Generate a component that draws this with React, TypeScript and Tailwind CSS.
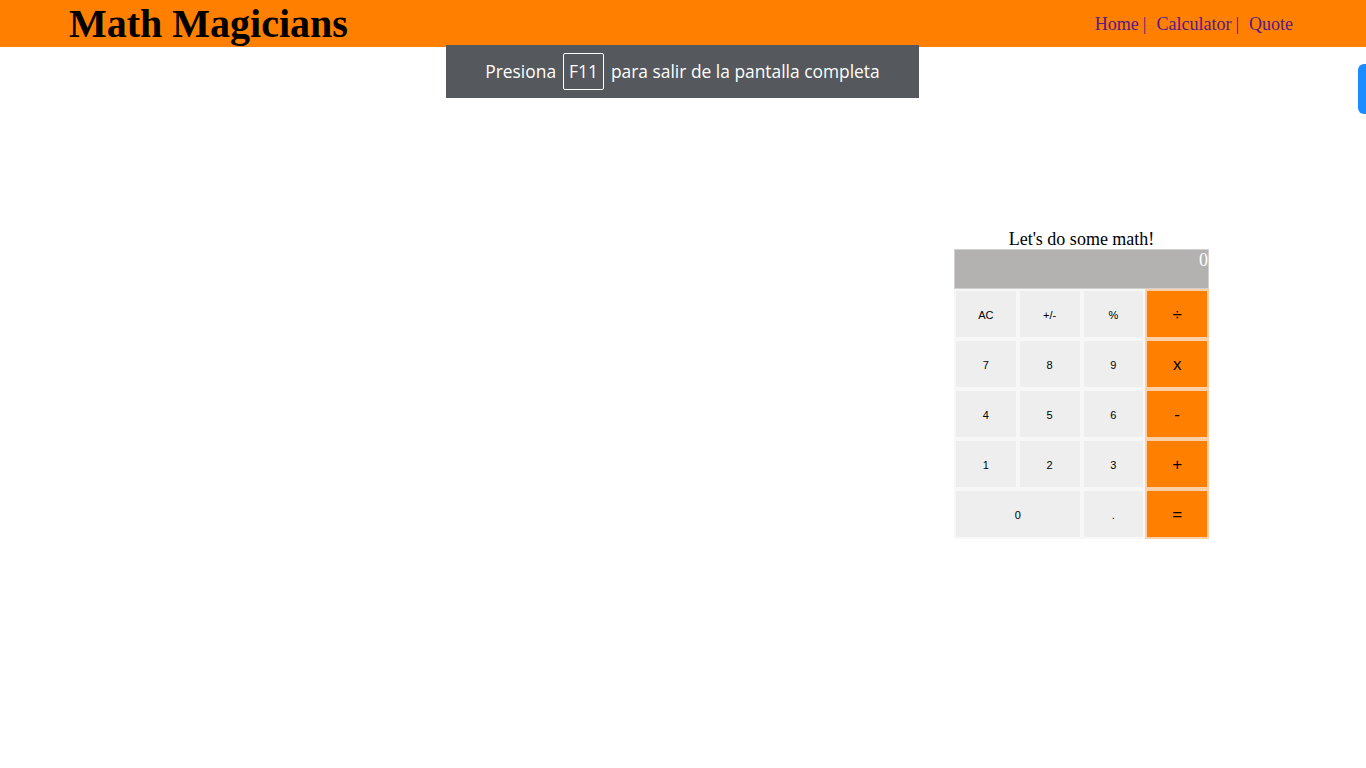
import React from "react"

const keys = [
  { label: "AC", op: false },
  { label: "+/-", op: false },
  { label: "%", op: false },
  { label: "÷", op: true },
  { label: "7", op: false },
  { label: "8", op: false },
  { label: "9", op: false },
  { label: "x", op: true },
  { label: "4", op: false },
  { label: "5", op: false },
  { label: "6", op: false },
  { label: "-", op: true },
  { label: "1", op: false },
  { label: "2", op: false },
  { label: "3", op: false },
  { label: "+", op: true },
  { label: "0", op: false, wide: true },
  { label: ".", op: false },
  { label: "=", op: true },
]

export default function App() {
  return (
    <div className="relative min-h-screen bg-white font-['Liberation_Serif',serif]">
      {/* Header */}
      <header className="h-[47px] bg-[#ff7f00] flex items-center justify-between pl-[69px] pr-[73px]">
        <h1 className="text-[40px] font-bold text-black leading-none">Math Magicians</h1>
        <nav className="text-[18px] text-[#551a8b] flex items-center pt-[2px]">
          <a href="#">Home</a>
          <span className="ml-[4px]">|</span>
          <a href="#" className="ml-[10px]">Calculator</a>
          <span className="ml-[4px]">|</span>
          <a href="#" className="ml-[10px]">Quote</a>
        </nav>
      </header>

      {/* Calculator */}
      <main className="flex justify-end pr-[157px] pt-[182px]">
        <div className="w-[255px] flex flex-col">
          <p className="text-center text-[18px] text-black leading-[20px]">Let's do some math!</p>
          <div className="h-[40px] bg-[#b3b2b0] border border-[#d0d0d0] text-white text-[18px] text-right leading-[20px]">0</div>
          <div className="grid grid-cols-4 font-['Liberation_Sans',sans-serif]">
            {keys.map((k) => (
              <button
                key={k.label}
                className={
                  k.op
                    ? "h-[50px] pt-[2px] bg-[#ff7f00] border-2 border-[#ffcfa6] text-[17px] text-black"
                    : k.wide
                    ? "col-span-2 h-[50px] pt-[2px] bg-[#eeeeee] border-2 border-[#f7f7f7] text-[11px] text-black"
                    : "h-[50px] pt-[2px] bg-[#eeeeee] border-2 border-[#f7f7f7] text-[11px] text-black"
                }
              >
                {k.label}
              </button>
            ))}
          </div>
        </div>
      </main>

      {/* Fullscreen notice */}
      <div className="absolute left-[446px] top-[45px] w-[473px] h-[53px] bg-[#55585c] flex items-center justify-center gap-[7px] text-white text-[17.4px] font-['Open_Sans',sans-serif]">
        <span>Presiona</span>
        <span className="border border-white rounded-[2px] px-[5px] h-[37px] flex items-center">F11</span>
        <span>para salir de la pantalla completa</span>
      </div>

      {/* Side tab */}
      <div className="absolute right-0 top-[64px] w-[8px] h-[50px] bg-[#1a8cff] rounded-l-[6px]" />
    </div>
  )
}
